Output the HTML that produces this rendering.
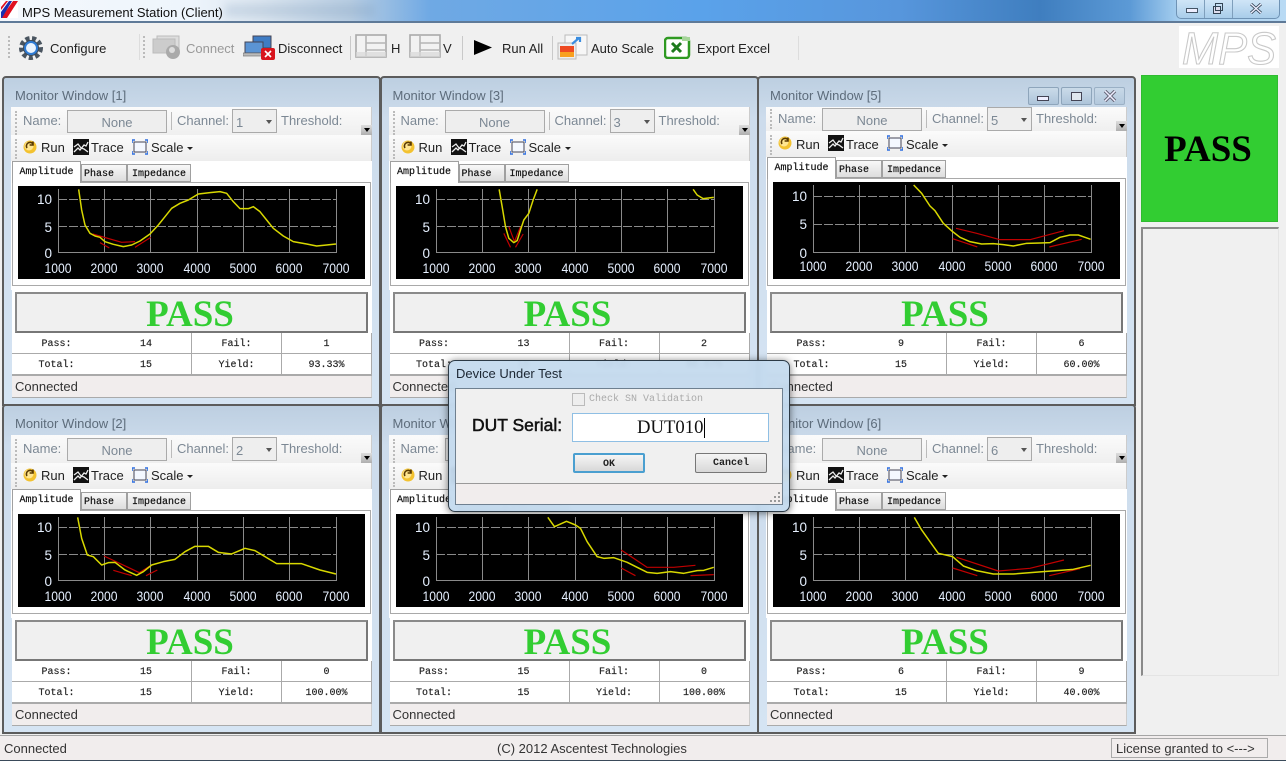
<!DOCTYPE html>
<html><head><meta charset="utf-8"><title>MPS Measurement Station (Client)</title>
<style>
html,body{margin:0;padding:0;width:1286px;height:763px;overflow:hidden;background:#f0f0f0;font-family:"Liberation Sans",sans-serif;font-size:13px;color:#222}
body{filter:blur(.35px)}
div,span,svg{position:absolute;box-sizing:border-box;white-space:nowrap}
.tt{line-height:16px}
.titlebar{left:0;top:0;width:1286px;height:23px;background:linear-gradient(90deg,#f4f8fd 0,#eef5fc 190px,#dce6f0 260px,#b8cde2 350px,#6fa9e4 430px,#5aa2ea 700px,#5796dc 900px,#3f7ebf 1040px,#5c9ad6 1130px,#a8d0f0 1180px,#b9daf4 1286px);border-bottom:2px solid #5f7a98}
.ctl{left:1176px;top:0;width:104px;height:19px;border:1px solid #6f93b5;border-top:0;border-radius:0 0 5px 5px;background:linear-gradient(#cfe5f7,#a9cdea)}
.tool{top:41px;line-height:16px}
.hd{width:2px;top:36px;height:22px;border-left:2px dotted #bbb}
.sp{width:1px;top:36px;height:24px;background:#c9c9c9}
.w{width:0;height:0}
.fr{left:2px;top:76px;width:379px;height:330px;border:2px solid #5c5c5c;border-radius:4px 4px 0 0;background:linear-gradient(#bdcfe1 0,#cddcec 40px,#d5e4f3 100%)}
.t{left:15px;top:88px;color:#5d6c7b;line-height:16px}
.b1{left:11px;top:107px;width:361px;height:28px;background:linear-gradient(#fbfbfb,#efefef);border-right:1px solid #ccc}
.b2{left:11px;top:135px;width:361px;height:26px;background:linear-gradient(#fbfbfb,#ededed);border-right:1px solid #ccc}
.h1{left:15px;top:111px;height:24px;width:2px;border-left:2px dotted #bbb}
.h2{left:15px;top:139px;height:20px;width:2px;border-left:2px dotted #bbb}
.l{top:113px;color:#7c8894;line-height:16px}
.name{left:67px;top:110px;width:100px;height:23px;border:1px solid #aaa;background:#eee;color:#7c8894;text-align:center;line-height:23px}
.sep{left:171px;top:112px;width:1px;height:18px;background:#bbb}
.cb{left:232px;top:109px;width:45px;height:24px;border:1px solid #aaa;background:#eee;color:#7c8894;line-height:25px;padding-left:3px}
.cb i{position:absolute;right:4px;top:10px;border:3px solid transparent;border-top:4px solid #555;border-bottom:0}
.ov{left:361px;top:125px;width:11px;height:11px;background:linear-gradient(#ddd,#aaa)}
.ov i{position:absolute;left:3px;top:3px;border:3px solid transparent;border-top:4px solid #000;border-bottom:0}
.l2{top:140px;line-height:16px;color:#222}
.ar{left:187px;top:147px;border:3px solid transparent;border-top:3px solid #222;border-bottom:0;width:0;height:0}
.ic{top:139px;width:16px;height:16px}
.pg{left:11px;top:161px;width:361px;height:129px;background:#fff}
.tab{top:164px;height:18px;border:1px solid #a0a0a0;background:linear-gradient(#f8f8f8,#ddd);font:10px/19px "Liberation Mono",monospace;text-align:center;color:#111;-webkit-text-stroke:.2px #111}
.tab.a{left:12px;top:161px;width:69px;height:22px;background:#fff;border-bottom:0;z-index:2;line-height:21px}
.tab.p{left:81px;width:46px;text-align:left;padding-left:2px}
.tab.m{left:127px;width:64px}
.box{left:12px;top:182px;width:359px;height:104px;border:1px solid #a9a9a9;background:#fff}
.plot{left:18px;top:186px;width:347px;height:93px;background:#000}
.cv{left:0;top:0;width:400px;height:300px}
.res{left:12px;top:290px;width:360px;height:85px;background:#fff}
.pb{left:15px;top:292px;width:353px;height:41px;border:2px solid #8a8a8a;border-right-color:#777;border-bottom-color:#777;background:#f0f0f0;color:#32cd32;font:bold 37px/41px "Liberation Serif",serif;text-align:center;padding-right:3px}
.c{height:21px;width:90px;border-right:1px solid #aaa;border-bottom:1px solid #aaa;font:10px/24px "Liberation Mono",monospace;text-align:center;color:#222;background:#fff;-webkit-text-stroke:.15px #222}
.c1{left:12px}.c2{left:101px}.c3{left:192px}.c4{left:282px}
.r1{top:333px}.r2{top:354px;border-bottom:2px solid #aaa;height:22px}
.st{left:12px;top:376px;width:360px;height:22px;background:#f1eded;border-bottom:1px solid #aaa;border-right:1px solid #ccc;padding-left:3px;line-height:21px;color:#333}
.v .b1{height:24px}.v .b2{top:131px}.v .h2{top:135px}.v .ic{top:135px}.v .l2{top:137px}.v .ar{top:144px}
.v .l{top:111px}.v .name{top:108px}.v .cb{top:107px}.v .ov{top:121px}.v .sep{top:110px}.v .h1{top:109px;height:20px}
.v .pg{top:157px;height:133px}.v .tab{top:160px}.v .tab.a{top:157px}.v .box{top:178px;height:108px}.v .plot{top:182px;height:97px}
.wb{top:87px;width:31px;height:18px;border:1px solid #8ea5bb;border-radius:2px;background:linear-gradient(#cbdbe9,#adc4da)}
svg text{font-family:"Liberation Sans",sans-serif;font-size:13.5px;fill:#e6f0ff}
.bg line{stroke:#8a8a8a;stroke-width:1}
.y{fill:none;stroke:#d8d800;stroke-width:4.5;stroke-linejoin:round}
.r{fill:none;stroke:#c00000;stroke-width:3.6;stroke-linejoin:round}
.dlg{left:448px;top:360px;width:342px;height:152px;border:1px solid #2c3a46;border-radius:7px;background:rgba(196,218,238,.94);backdrop-filter:blur(2px);box-shadow:0 1px 8px rgba(0,0,0,.55);z-index:20}
.dc{left:6px;top:27px;width:328px;height:117px;border:1px solid #6f8090;background:#f0f0f0}
.btn{top:91px;width:72px;height:20px;border:1px solid #777;border-radius:2px;background:linear-gradient(#f5f5f5,#d8d8d8);font:bold 10px/19px "Liberation Mono",monospace;text-align:center;color:#222}
</style></head><body>
<svg width="0" height="0" style="left:0;top:0">
<defs>
<symbol id="run" viewBox="0 0 16 16"><circle cx="8" cy="8" r="6.5" fill="#f3c230"/><circle cx="7" cy="7" r="4.5" fill="#ffe690"/><path d="M5 9a3.5 3.5 0 0 1 6-4M11 2.5V6H7.6" fill="none" stroke="#5a3a00" stroke-width="1.6"/></symbol>
<symbol id="trc" viewBox="0 0 16 16"><rect width="16" height="16" fill="#111"/><path d="M1 13l4-4 2 2 4-5 2 1 2-4M1 8l4-3 3 4 3 1 4 3" fill="none" stroke="#eee" stroke-width="1.3"/></symbol>
<symbol id="scl" viewBox="0 0 16 16"><rect x="2" y="3" width="12" height="10" fill="#f4f8ff" stroke="#445" stroke-width="1"/><path d="M0 4V1h3M13 1h3v3M16 12v3h-3M3 15H0v-3" fill="none" stroke="#2f6fe0" stroke-width="1.6"/></symbol>
<symbol id="lay" viewBox="0 0 32 24"><rect x="1" y="1" width="30" height="22" fill="#f2f2f2" stroke="#aaa" stroke-width="1.6"/><path d="M11 1v22M11 9h20M11 16h20" stroke="#b5b5b5" stroke-width="1.6" fill="none"/><rect x="1" y="18" width="30" height="5" fill="#d9d9d9" opacity=".7"/></symbol>
<symbol id="g1" viewBox="0 0 400 300">
<g class="bg"><line x1="58.5" y1="189" x2="58.5" y2="253"/><line x1="104.5" y1="189" x2="104.5" y2="253"/><line x1="150.5" y1="189" x2="150.5" y2="253"/><line x1="197.5" y1="189" x2="197.5" y2="253"/><line x1="243.5" y1="189" x2="243.5" y2="253"/><line x1="289.5" y1="189" x2="289.5" y2="253"/><line x1="336.5" y1="189" x2="336.5" y2="253"/><line x1="58" y1="252.5" x2="337" y2="252.5"/><line x1="58" y1="199.5" x2="337" y2="199.5" stroke-dasharray="9 2"/><line x1="58" y1="226.5" x2="337" y2="226.5" stroke-dasharray="9 2"/></g>
</symbol>
<symbol id="g2" viewBox="0 0 400 300">
<g class="bg"><line x1="58.5" y1="185" x2="58.5" y2="253"/><line x1="104.5" y1="185" x2="104.5" y2="253"/><line x1="150.5" y1="185" x2="150.5" y2="253"/><line x1="197.5" y1="185" x2="197.5" y2="253"/><line x1="243.5" y1="185" x2="243.5" y2="253"/><line x1="289.5" y1="185" x2="289.5" y2="253"/><line x1="336.5" y1="185" x2="336.5" y2="253"/><line x1="58" y1="252.5" x2="337" y2="252.5"/><line x1="58" y1="196.5" x2="337" y2="196.5" stroke-dasharray="9 2"/><line x1="58" y1="224.5" x2="337" y2="224.5" stroke-dasharray="9 2"/></g>
</symbol>
</defs></svg>

<div class="titlebar"></div>
<div style="left:225px;top:4px;width:150px;height:13px;background:rgba(120,150,180,.22);filter:blur(4px)"></div>
<svg style="left:1px;top:1px" width="17" height="17" viewBox="0 0 17 17"><rect width="17" height="17" fill="#fff"/><path d="M0 6 5 0h2L0 9zM0 17 12 0h5L6 17z" fill="#e01020"/><path d="M0 11 8 0h3L1 17H0z" fill="#1a2fb0"/></svg>
<div class="tt" style="left:22px;top:5px;color:#111">MPS Measurement Station (Client)</div>
<div class="ctl">
<div style="left:27px;top:0;width:1px;height:18px;background:#7f9fbc"></div><div style="left:55px;top:0;width:1px;height:18px;background:#7f9fbc"></div>
<div style="left:9px;top:8px;width:12px;height:5px;background:#eef;border:1px solid #456"></div>
<div style="left:36px;top:6px;width:8px;height:8px;background:#dde;border:1px solid #345"></div><div style="left:38px;top:3px;width:8px;height:8px;border:1px solid #345"></div>
<svg style="left:72px;top:3px" width="14" height="11" viewBox="0 0 14 11"><path d="M2 1l10 9M12 1 2 10" stroke="#345" stroke-width="3"/><path d="M2 1l10 9M12 1 2 10" stroke="#eef" stroke-width="1.4"/></svg>
</div>

<div class="hd" style="left:8px"></div>
<svg style="left:17px;top:36px" width="28" height="24" viewBox="0 0 28 24"><circle cx="14" cy="12" r="9.5" fill="none" stroke="#4a5560" stroke-width="5" stroke-dasharray="4 2.5"/><circle cx="14" cy="12" r="8" fill="#3d4a58"/><circle cx="14" cy="12" r="6" fill="#eaf4ff" stroke="#2e7bd4" stroke-width="2"/></svg>
<div class="tool" style="left:50px">Configure</div>
<div class="sp" style="left:139px;top:34px;height:26px;background:#ddd"></div><div class="hd" style="left:143px"></div>
<svg style="left:152px;top:35px" width="30" height="25" viewBox="0 0 30 25"><rect x="5" y="1" width="22" height="14" fill="#ddd" stroke="#bbb"/><rect x="1" y="4" width="22" height="14" fill="#ccc" stroke="#bbb"/><circle cx="21" cy="17" r="7" fill="#aaa"/><circle cx="20" cy="15" r="3" fill="#ddd"/></svg>
<div class="tool" style="left:186px;color:#999">Connect</div>
<svg style="left:243px;top:34px" width="32" height="26" viewBox="0 0 32 26"><rect x="10" y="2" width="18" height="12" fill="#3f7cc4" stroke="#445"/><rect x="2" y="8" width="18" height="11" fill="#5b94d4" stroke="#445"/><rect x="0" y="19" width="20" height="3" fill="#bbb" stroke="#666" stroke-width=".6"/><rect x="18" y="14" width="14" height="12" rx="2" fill="#d8141c"/><path d="M22 17l6 6M28 17l-6 6" stroke="#fff" stroke-width="1.6"/></svg>
<div class="tool" style="left:278px">Disconnect</div>
<div class="sp" style="left:350px"></div>
<svg style="left:355px;top:34px" width="32" height="24"><use href="#lay"/></svg>
<div class="tool" style="left:391px">H</div>
<svg style="left:409px;top:34px" width="32" height="24"><use href="#lay"/></svg>
<div class="tool" style="left:443px">V</div>
<div class="sp" style="left:462px"></div>
<svg style="left:474px;top:40px" width="18" height="15" viewBox="0 0 18 15"><path d="M0 0 18 7.500 0 15z" fill="#000"/></svg>
<div class="tool" style="left:502px">Run All</div>
<div class="sp" style="left:552px"></div>
<svg style="left:557px;top:34px" width="31" height="26" viewBox="0 0 31 26"><rect x="8" y="1" width="22" height="20" fill="#f7f7f7" stroke="#bbb"/><rect x="1" y="9" width="18" height="16" fill="#eee" stroke="#bbb"/><rect x="3" y="12" width="14" height="11" fill="#ee4a22"/><rect x="3" y="18" width="14" height="5" fill="#f8a020"/><path d="M15 10l7-6M19 4h4v4" stroke="#3a8de0" stroke-width="2.200" fill="none"/></svg>
<div class="tool" style="left:591px">Auto Scale</div>
<svg style="left:664px;top:35px" width="28" height="24" viewBox="0 0 28 24"><rect x="1" y="3" width="24" height="20" rx="3" fill="#fff" stroke="#2f9a22" stroke-width="2.500"/><path d="M8 8l9 9M17 8l-9 9" stroke="#1d7a1d" stroke-width="3"/><path d="M18 2h8v4h-8z" fill="#a6d69a"/></svg>
<div class="tool" style="left:697px">Export Excel</div>
<div class="sp" style="left:798px;background:#ddd"></div>

<div style="left:1179px;top:26px;width:100px;height:42px;background:#fff"></div>
<svg style="left:1179px;top:26px" width="100" height="42" viewBox="0 0 100 42"><text x="3" y="38" style="font-size:45px;font-style:italic;fill:#fff;stroke:#c9c9c9;stroke-width:1.100" textLength="94" lengthAdjust="spacingAndGlyphs">MPS</text></svg>

<div style="left:1141px;top:75px;width:137px;height:147px;background:#32cd32;border:1px solid #2fbb30;color:#000;font:bold 37px/147px 'Liberation Serif',serif;text-align:center;padding-right:3px">PASS</div>
<div style="left:1141px;top:227px;width:138px;height:449px;border:2px solid #8a8a8a;border-right:1px solid #e4e4e4;border-bottom:1px solid #e4e4e4;background:#f0f0f0"></div>

<!-- W1 -->
<div class="w" style="left:0;top:0">
<div class="fr"></div><div class="t">Monitor Window [1]</div>
<div class="b1"></div><div class="h1"></div><div class="l" style="left:23px">Name:</div><div class="name">None</div><div class="sep"></div><div class="l" style="left:177px">Channel:</div><div class="cb">1<i></i></div><div class="l" style="left:281px">Threshold:</div><div class="ov"><i></i></div>
<div class="b2"></div><div class="h2"></div><svg class="ic" style="left:22px"><use href="#run"/></svg><div class="l2" style="left:41px">Run</div><svg class="ic" style="left:73px"><use href="#trc"/></svg><div class="l2" style="left:91px">Trace</div><svg class="ic" style="left:132px"><use href="#scl"/></svg><div class="l2" style="left:151px">Scale</div><div class="ar"></div>
<div class="pg"></div><div class="box"></div><div class="tab a">Amplitude</div><div class="tab p">Phase</div><div class="tab m">Impedance</div><div class="plot"></div>
<svg class="cv" viewBox="0 0 400 300"><use href="#g1" width="400" height="300"/>
<text x="52" y="204" text-anchor="end">10</text><text x="52" y="232" text-anchor="end">5</text><text x="52" y="258" text-anchor="end">0</text><text x="58" y="273" text-anchor="middle" textLength="27" lengthAdjust="spacingAndGlyphs">1000</text><text x="104" y="273" text-anchor="middle" textLength="27" lengthAdjust="spacingAndGlyphs">2000</text><text x="150" y="273" text-anchor="middle" textLength="27" lengthAdjust="spacingAndGlyphs">3000</text><text x="197" y="273" text-anchor="middle" textLength="27" lengthAdjust="spacingAndGlyphs">4000</text><text x="243" y="273" text-anchor="middle" textLength="27" lengthAdjust="spacingAndGlyphs">5000</text><text x="289" y="273" text-anchor="middle" textLength="27" lengthAdjust="spacingAndGlyphs">6000</text><text x="336" y="273" text-anchor="middle" textLength="27" lengthAdjust="spacingAndGlyphs">7000</text>
<g transform="translate(0,160) scale(.3333)"><path class="r" d="M278 222 365 247 405 245M300 248 328 264M405 262 452 232"/><path class="y" d="M236 88 245 150 255 195 270 220 285 228 300 232 315 245 340 253 370 260 395 255 420 243 450 222 475 195 495 170 515 145 540 130 565 120 595 102 630 98 660 95 680 100 700 125 720 146 745 146 760 140 780 155 800 180 820 205 850 228 880 245 920 252 950 258 980 255 1008 252"/></g></svg>
<div class="res"></div><div class="pb">PASS</div>
<div class="c c1 r1">Pass:</div><div class="c c2 r1" style="width:91px">14</div><div class="c c3 r1">Fail:</div><div class="c c4 r1">1</div>
<div class="c c1 r2">Total:</div><div class="c c2 r2" style="width:91px">15</div><div class="c c3 r2">Yield:</div><div class="c c4 r2">93.33%</div>
<div class="st">Connected</div>
</div>

<!-- W2 -->
<div class="w" style="left:0;top:328px">
<div class="fr"></div><div class="t">Monitor Window [2]</div>
<div class="b1"></div><div class="h1"></div><div class="l" style="left:23px">Name:</div><div class="name">None</div><div class="sep"></div><div class="l" style="left:177px">Channel:</div><div class="cb">2<i></i></div><div class="l" style="left:281px">Threshold:</div><div class="ov"><i></i></div>
<div class="b2"></div><div class="h2"></div><svg class="ic" style="left:22px"><use href="#run"/></svg><div class="l2" style="left:41px">Run</div><svg class="ic" style="left:73px"><use href="#trc"/></svg><div class="l2" style="left:91px">Trace</div><svg class="ic" style="left:132px"><use href="#scl"/></svg><div class="l2" style="left:151px">Scale</div><div class="ar"></div>
<div class="pg"></div><div class="box"></div><div class="tab a">Amplitude</div><div class="tab p">Phase</div><div class="tab m">Impedance</div><div class="plot"></div>
<svg class="cv" viewBox="0 0 400 300"><use href="#g1" width="400" height="300"/>
<text x="52" y="204" text-anchor="end">10</text><text x="52" y="232" text-anchor="end">5</text><text x="52" y="258" text-anchor="end">0</text><text x="58" y="273" text-anchor="middle" textLength="27" lengthAdjust="spacingAndGlyphs">1000</text><text x="104" y="273" text-anchor="middle" textLength="27" lengthAdjust="spacingAndGlyphs">2000</text><text x="150" y="273" text-anchor="middle" textLength="27" lengthAdjust="spacingAndGlyphs">3000</text><text x="197" y="273" text-anchor="middle" textLength="27" lengthAdjust="spacingAndGlyphs">4000</text><text x="243" y="273" text-anchor="middle" textLength="27" lengthAdjust="spacingAndGlyphs">5000</text><text x="289" y="273" text-anchor="middle" textLength="27" lengthAdjust="spacingAndGlyphs">6000</text><text x="336" y="273" text-anchor="middle" textLength="27" lengthAdjust="spacingAndGlyphs">7000</text>
<g transform="translate(0,172) scale(.3333)"><path class="r" d="M312 168 418 218 450 198M340 211 395 227M438 227 472 210"/><path class="y" d="M233 52 245 115 262 165 280 170 305 195 325 188 345 187 375 210 410 226 430 215 455 195 490 185 525 178 555 155 585 139 625 139 655 157 695 162 735 145 765 152 830 191 905 191 960 210 1008 222"/></g></svg>
<div class="res"></div><div class="pb">PASS</div>
<div class="c c1 r1">Pass:</div><div class="c c2 r1" style="width:91px">15</div><div class="c c3 r1">Fail:</div><div class="c c4 r1">0</div>
<div class="c c1 r2">Total:</div><div class="c c2 r2" style="width:91px">15</div><div class="c c3 r2">Yield:</div><div class="c c4 r2">100.00%</div>
<div class="st">Connected</div>
</div>

<!-- W3 -->
<div class="w" style="left:377.5px;top:0">
<div class="fr"></div><div class="t">Monitor Window [3]</div>
<div class="b1"></div><div class="h1"></div><div class="l" style="left:23px">Name:</div><div class="name">None</div><div class="sep"></div><div class="l" style="left:177px">Channel:</div><div class="cb">3<i></i></div><div class="l" style="left:281px">Threshold:</div><div class="ov"><i></i></div>
<div class="b2"></div><div class="h2"></div><svg class="ic" style="left:22px"><use href="#run"/></svg><div class="l2" style="left:41px">Run</div><svg class="ic" style="left:73px"><use href="#trc"/></svg><div class="l2" style="left:91px">Trace</div><svg class="ic" style="left:132px"><use href="#scl"/></svg><div class="l2" style="left:151px">Scale</div><div class="ar"></div>
<div class="pg"></div><div class="box"></div><div class="tab a">Amplitude</div><div class="tab p">Phase</div><div class="tab m">Impedance</div><div class="plot"></div>
<svg class="cv" viewBox="0 0 400 300"><use href="#g1" width="400" height="300"/>
<text x="52" y="204" text-anchor="end">10</text><text x="52" y="232" text-anchor="end">5</text><text x="52" y="258" text-anchor="end">0</text><text x="58" y="273" text-anchor="middle" textLength="27" lengthAdjust="spacingAndGlyphs">1000</text><text x="104" y="273" text-anchor="middle" textLength="27" lengthAdjust="spacingAndGlyphs">2000</text><text x="150" y="273" text-anchor="middle" textLength="27" lengthAdjust="spacingAndGlyphs">3000</text><text x="197" y="273" text-anchor="middle" textLength="27" lengthAdjust="spacingAndGlyphs">4000</text><text x="243" y="273" text-anchor="middle" textLength="27" lengthAdjust="spacingAndGlyphs">5000</text><text x="289" y="273" text-anchor="middle" textLength="27" lengthAdjust="spacingAndGlyphs">6000</text><text x="336" y="273" text-anchor="middle" textLength="27" lengthAdjust="spacingAndGlyphs">7000</text>
<g transform="translate(2.500,170) scale(.3333)"><path class="r" d="M370 190 390 232M385 170 402 215 420 170M405 232 428 192"/><path class="y" d="M356 58 365 110 375 170 385 205 400 218 410 212 420 180 430 150 445 130 458 90 470 58M938 58 950 75 968 86 1000 82"/></g></svg>
<div class="res"></div><div class="pb">PASS</div>
<div class="c c1 r1">Pass:</div><div class="c c2 r1" style="width:91px">13</div><div class="c c3 r1">Fail:</div><div class="c c4 r1">2</div>
<div class="c c1 r2">Total:</div><div class="c c2 r2" style="width:91px">15</div><div class="c c3 r2">Yield:</div><div class="c c4 r2">86.67%</div>
<div class="st">Connected</div>
</div>

<!-- W4 -->
<div class="w" style="left:377.5px;top:328px">
<div class="fr"></div><div class="t">Monitor Window [4]</div>
<div class="b1"></div><div class="h1"></div><div class="l" style="left:23px">Name:</div><div class="name">None</div><div class="sep"></div><div class="l" style="left:177px">Channel:</div><div class="cb">4<i></i></div><div class="l" style="left:281px">Threshold:</div><div class="ov"><i></i></div>
<div class="b2"></div><div class="h2"></div><svg class="ic" style="left:22px"><use href="#run"/></svg><div class="l2" style="left:41px">Run</div><svg class="ic" style="left:73px"><use href="#trc"/></svg><div class="l2" style="left:91px">Trace</div><svg class="ic" style="left:132px"><use href="#scl"/></svg><div class="l2" style="left:151px">Scale</div><div class="ar"></div>
<div class="pg"></div><div class="box"></div><div class="tab a">Amplitude</div><div class="tab p">Phase</div><div class="tab m">Impedance</div><div class="plot"></div>
<svg class="cv" viewBox="0 0 400 300"><use href="#g1" width="400" height="300"/>
<text x="52" y="204" text-anchor="end">10</text><text x="52" y="232" text-anchor="end">5</text><text x="52" y="258" text-anchor="end">0</text><text x="58" y="273" text-anchor="middle" textLength="27" lengthAdjust="spacingAndGlyphs">1000</text><text x="104" y="273" text-anchor="middle" textLength="27" lengthAdjust="spacingAndGlyphs">2000</text><text x="150" y="273" text-anchor="middle" textLength="27" lengthAdjust="spacingAndGlyphs">3000</text><text x="197" y="273" text-anchor="middle" textLength="27" lengthAdjust="spacingAndGlyphs">4000</text><text x="243" y="273" text-anchor="middle" textLength="27" lengthAdjust="spacingAndGlyphs">5000</text><text x="289" y="273" text-anchor="middle" textLength="27" lengthAdjust="spacingAndGlyphs">6000</text><text x="336" y="273" text-anchor="middle" textLength="27" lengthAdjust="spacingAndGlyphs">7000</text>
<g transform="translate(2.500,172) scale(.3333)"><path class="r" d="M722 150 800 202 880 202 945 196M722 204 765 227M930 227 1000 224"/><path class="y" d="M502 52 522 80 558 64 585 75 600 85 620 125 650 170 670 175 700 173 740 187 800 217 830 220 870 215 910 220 950 212 970 211 1000 202"/></g></svg>
<div class="res"></div><div class="pb">PASS</div>
<div class="c c1 r1">Pass:</div><div class="c c2 r1" style="width:91px">15</div><div class="c c3 r1">Fail:</div><div class="c c4 r1">0</div>
<div class="c c1 r2">Total:</div><div class="c c2 r2" style="width:91px">15</div><div class="c c3 r2">Yield:</div><div class="c c4 r2">100.00%</div>
<div class="st">Connected</div>
</div>

<!-- W5 -->
<div class="w v" style="left:755px;top:0">
<div class="fr"></div><div class="t">Monitor Window [5]</div>
<div class="wb" style="left:273px"></div><div class="wb" style="left:306px"></div><div class="wb" style="left:339px;opacity:.75"></div>
<div style="left:282px;top:96px;width:12px;height:5px;border:1px solid #445;background:#eef"></div>
<div style="left:316px;top:92px;width:11px;height:9px;border:1px solid #445;background:#dfe7ef"></div>
<svg style="left:348px;top:90px" width="14" height="12" viewBox="0 0 14 12"><path d="M2 1l10 10M12 1 2 11" stroke="#667" stroke-width="3.500"/><path d="M2 1l10 10M12 1 2 11" stroke="#eef" stroke-width="1.500"/></svg>
<div class="b1"></div><div class="h1"></div><div class="l" style="left:23px">Name:</div><div class="name">None</div><div class="sep"></div><div class="l" style="left:177px">Channel:</div><div class="cb">5<i></i></div><div class="l" style="left:281px">Threshold:</div><div class="ov"><i></i></div>
<div class="b2"></div><div class="h2"></div><svg class="ic" style="left:22px"><use href="#run"/></svg><div class="l2" style="left:41px">Run</div><svg class="ic" style="left:73px"><use href="#trc"/></svg><div class="l2" style="left:91px">Trace</div><svg class="ic" style="left:132px"><use href="#scl"/></svg><div class="l2" style="left:151px">Scale</div><div class="ar"></div>
<div class="pg"></div><div class="box"></div><div class="tab a">Amplitude</div><div class="tab p">Phase</div><div class="tab m">Impedance</div><div class="plot"></div>
<svg class="cv" viewBox="0 0 400 300"><use href="#g2" width="400" height="300"/>
<text x="52" y="201" text-anchor="end">10</text><text x="52" y="229" text-anchor="end">5</text><text x="52" y="258" text-anchor="end">0</text><text x="58" y="271" text-anchor="middle" textLength="27" lengthAdjust="spacingAndGlyphs">1000</text><text x="104" y="271" text-anchor="middle" textLength="27" lengthAdjust="spacingAndGlyphs">2000</text><text x="150" y="271" text-anchor="middle" textLength="27" lengthAdjust="spacingAndGlyphs">3000</text><text x="197" y="271" text-anchor="middle" textLength="27" lengthAdjust="spacingAndGlyphs">4000</text><text x="243" y="271" text-anchor="middle" textLength="27" lengthAdjust="spacingAndGlyphs">5000</text><text x="289" y="271" text-anchor="middle" textLength="27" lengthAdjust="spacingAndGlyphs">6000</text><text x="336" y="271" text-anchor="middle" textLength="27" lengthAdjust="spacingAndGlyphs">7000</text>
<g transform="translate(5,80) scale(.3333)"><path class="r" d="M588 445 650 460 720 479 810 479 912 452M578 476 652 501M868 501 965 478"/><path class="y" d="M461 315 485 340 510 378 525 392 550 430 578 455 600 472 630 485 665 492 700 491 730 494 760 498 800 490 840 489 870 488 900 472 930 465 955 465 975 472 992 478"/></g></svg>
<div class="res"></div><div class="pb">PASS</div>
<div class="c c1 r1">Pass:</div><div class="c c2 r1" style="width:91px">9</div><div class="c c3 r1">Fail:</div><div class="c c4 r1">6</div>
<div class="c c1 r2">Total:</div><div class="c c2 r2" style="width:91px">15</div><div class="c c3 r2">Yield:</div><div class="c c4 r2">60.00%</div>
<div class="st">Connected</div>
</div>

<!-- W6 -->
<div class="w" style="left:755px;top:328px">
<div class="fr"></div><div class="t">Monitor Window [6]</div>
<div class="b1"></div><div class="h1"></div><div class="l" style="left:23px">Name:</div><div class="name">None</div><div class="sep"></div><div class="l" style="left:177px">Channel:</div><div class="cb">6<i></i></div><div class="l" style="left:281px">Threshold:</div><div class="ov"><i></i></div>
<div class="b2"></div><div class="h2"></div><svg class="ic" style="left:22px"><use href="#run"/></svg><div class="l2" style="left:41px">Run</div><svg class="ic" style="left:73px"><use href="#trc"/></svg><div class="l2" style="left:91px">Trace</div><svg class="ic" style="left:132px"><use href="#scl"/></svg><div class="l2" style="left:151px">Scale</div><div class="ar"></div>
<div class="pg"></div><div class="box"></div><div class="tab a">Amplitude</div><div class="tab p">Phase</div><div class="tab m">Impedance</div><div class="plot"></div>
<svg class="cv" viewBox="0 0 400 300"><use href="#g1" width="400" height="300"/>
<text x="52" y="204" text-anchor="end">10</text><text x="52" y="232" text-anchor="end">5</text><text x="52" y="258" text-anchor="end">0</text><text x="58" y="273" text-anchor="middle" textLength="27" lengthAdjust="spacingAndGlyphs">1000</text><text x="104" y="273" text-anchor="middle" textLength="27" lengthAdjust="spacingAndGlyphs">2000</text><text x="150" y="273" text-anchor="middle" textLength="27" lengthAdjust="spacingAndGlyphs">3000</text><text x="197" y="273" text-anchor="middle" textLength="27" lengthAdjust="spacingAndGlyphs">4000</text><text x="243" y="273" text-anchor="middle" textLength="27" lengthAdjust="spacingAndGlyphs">5000</text><text x="289" y="273" text-anchor="middle" textLength="27" lengthAdjust="spacingAndGlyphs">6000</text><text x="336" y="273" text-anchor="middle" textLength="27" lengthAdjust="spacingAndGlyphs">7000</text>
<g transform="translate(5,172) scale(.3333)"><path class="r" d="M590 172 715 213 810 205 912 180M578 204 652 227M868 227 960 206"/><path class="y" d="M463 52 485 90 510 125 535 160 578 170 610 198 650 212 700 222 760 222 850 215 940 208 992 196"/></g></svg>
<div class="res"></div><div class="pb">PASS</div>
<div class="c c1 r1">Pass:</div><div class="c c2 r1" style="width:91px">6</div><div class="c c3 r1">Fail:</div><div class="c c4 r1">9</div>
<div class="c c1 r2">Total:</div><div class="c c2 r2" style="width:91px">15</div><div class="c c3 r2">Yield:</div><div class="c c4 r2">40.00%</div>
<div class="st">Connected</div>
</div>

<!-- status bar -->
<div style="left:0;top:735px;width:1286px;height:26px;background:#f1eded;border-top:1px solid #a5a5a5;border-bottom:1px solid #3a4a5a"></div>
<div style="left:0;top:761px;width:1286px;height:2px;background:#fff"></div>
<div class="tt" style="left:4px;top:741px;color:#333">Connected</div>
<div class="tt" style="left:497px;top:741px;color:#333">(C) 2012 Ascentest Technologies</div>
<div style="left:1111px;top:738px;width:157px;height:20px;border:1px solid #aaa;line-height:20px;padding-left:4px;color:#333">License granted to &lt;---&gt;</div>

<!-- dialog -->
<div class="dlg">
<div class="tt" style="left:7px;top:5px;color:#1c2733">Device Under Test</div>
<div class="dc">
<div style="left:116px;top:4px;width:13px;height:13px;border:1px solid #bbb;background:#eee"></div>
<div style="left:133px;top:4px;font:10px/13px 'Liberation Mono',monospace;color:#aaa">Check SN Validation</div>
<div style="left:16px;top:26px;font-size:17.500px;line-height:20px;color:#111;-webkit-text-stroke:.5px #111">DUT Serial:</div>
<div style="left:116px;top:24px;width:197px;height:29px;border:1px solid #8fbfe4;background:#fff;font:18.700px/27px 'Liberation Serif',serif;color:#111;padding-left:64px">DUT010<span style="left:131px;top:4px;width:1px;height:20px;background:#000"></span></div>
<div class="btn" style="left:117px;top:64px;border:2px solid #4a9fd0">OK</div>
<div class="btn" style="left:239px;top:64px">Cancel</div>
<div style="left:0;top:94px;width:326px;height:21px;background:#f1eded;border-top:1px solid #999"></div>
<svg style="left:313px;top:102px" width="12" height="12" viewBox="0 0 12 12"><path d="M9 1h2v2H9zM5 5h2v2H5zM9 5h2v2H9zM1 9h2v2H1zM5 9h2v2H5zM9 9h2v2H9z" fill="#999"/></svg>
</div>
</div>
</body></html>
